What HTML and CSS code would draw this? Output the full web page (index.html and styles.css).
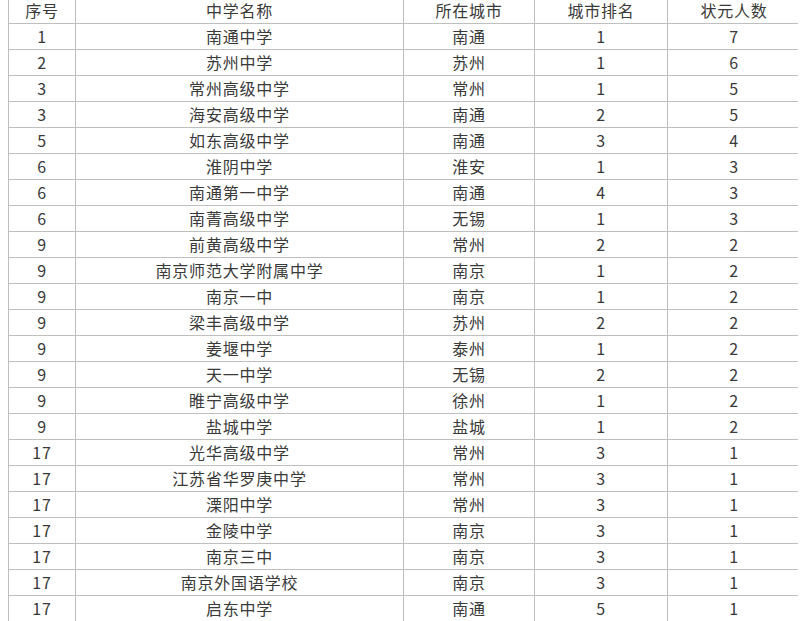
FILE: index.html
```html
<!DOCTYPE html>
<html lang="zh-CN">
<head>
<meta charset="utf-8">
<link rel="stylesheet" href="styles.css">
</head>
<body>
<table class="rank">
<colgroup>
<col class="c1"><col class="c2"><col class="c3"><col class="c4"><col class="c5">
</colgroup>
<thead>
<tr><th>序号</th><th>中学名称</th><th>所在城市</th><th>城市排名</th><th>状元人数</th></tr>
</thead>
<tbody>
<tr><td>1</td><td>南通中学</td><td>南通</td><td>1</td><td>7</td></tr>
<tr><td>2</td><td>苏州中学</td><td>苏州</td><td>1</td><td>6</td></tr>
<tr><td>3</td><td>常州高级中学</td><td>常州</td><td>1</td><td>5</td></tr>
<tr><td>3</td><td>海安高级中学</td><td>南通</td><td>2</td><td>5</td></tr>
<tr><td>5</td><td>如东高级中学</td><td>南通</td><td>3</td><td>4</td></tr>
<tr><td>6</td><td>淮阴中学</td><td>淮安</td><td>1</td><td>3</td></tr>
<tr><td>6</td><td>南通第一中学</td><td>南通</td><td>4</td><td>3</td></tr>
<tr><td>6</td><td>南菁高级中学</td><td>无锡</td><td>1</td><td>3</td></tr>
<tr><td>9</td><td>前黄高级中学</td><td>常州</td><td>2</td><td>2</td></tr>
<tr><td>9</td><td>南京师范大学附属中学</td><td>南京</td><td>1</td><td>2</td></tr>
<tr><td>9</td><td>南京一中</td><td>南京</td><td>1</td><td>2</td></tr>
<tr><td>9</td><td>梁丰高级中学</td><td>苏州</td><td>2</td><td>2</td></tr>
<tr><td>9</td><td>姜堰中学</td><td>泰州</td><td>1</td><td>2</td></tr>
<tr><td>9</td><td>天一中学</td><td>无锡</td><td>2</td><td>2</td></tr>
<tr><td>9</td><td>睢宁高级中学</td><td>徐州</td><td>1</td><td>2</td></tr>
<tr><td>9</td><td>盐城中学</td><td>盐城</td><td>1</td><td>2</td></tr>
<tr><td>17</td><td>光华高级中学</td><td>常州</td><td>3</td><td>1</td></tr>
<tr><td>17</td><td>江苏省华罗庚中学</td><td>常州</td><td>3</td><td>1</td></tr>
<tr><td>17</td><td>溧阳中学</td><td>常州</td><td>3</td><td>1</td></tr>
<tr><td>17</td><td>金陵中学</td><td>南京</td><td>3</td><td>1</td></tr>
<tr><td>17</td><td>南京三中</td><td>南京</td><td>3</td><td>1</td></tr>
<tr><td>17</td><td>南京外国语学校</td><td>南京</td><td>3</td><td>1</td></tr>
<tr><td>17</td><td>启东中学</td><td>南通</td><td>5</td><td>1</td></tr>
</tbody>
</table>
</body>
</html>
```
FILE: styles.css
```css
html, body {
  background: #fff;
}
body {
  margin: 0 8px;
  font-family: "Noto Sans CJK SC", "Noto Sans", sans-serif;
  color: #3a3a3a;
  font-size: 16px;
}
.rank {
  margin-top: -3px;
  border-collapse: collapse;
  table-layout: fixed;
  width: 792px;
}
.c1 { width: 67px; }
.c2 { width: 328px; }
.c3 { width: 131px; }
.c4 { width: 133px; }
.c5 { width: 133px; }
.rank th, .rank td {
  border: 1px solid #bfbfbf;
  height: 25px;
  padding: 0;
  text-align: center;
  font-weight: normal;
  line-height: 25px;
  letter-spacing: 0.8px;
}
```
